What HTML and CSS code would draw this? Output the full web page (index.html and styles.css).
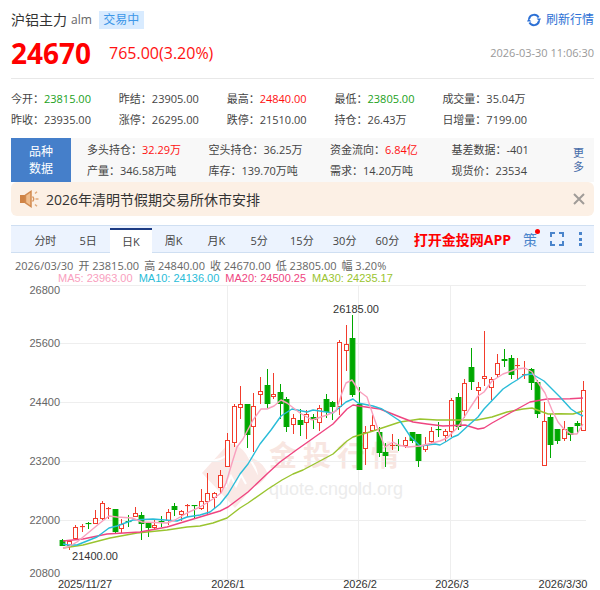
FILE: index.html
```html
<!DOCTYPE html>
<html lang="zh-CN">
<head>
<meta charset="utf-8">
<meta name="viewport" content="width=device-width, initial-scale=1">
<title>沪铝主力 alm</title>
<link rel="stylesheet" href="styles.css">
</head>
<body>
<main class="page">
  <header class="head">
    <div class="head-row">
      <h1 class="name">沪铝主力</h1>
      <span class="code">alm</span>
      <span class="status">交易中</span>
      <button class="refresh" type="button">
        <svg width="14" height="14" viewBox="0 0 14 14" fill="none" stroke="currentColor" stroke-width="2" aria-hidden="true">
          <path d="M2 6A5.2 5.2 0 0 1 11.6 4.4M12 8A5.2 5.2 0 0 1 2.400 9.600"/>
          <path d="M9.600 5.600H14L12.400 8.600ZM4.400 8.400H0L1.600 5.400Z" fill="currentColor" stroke="none"/>
        </svg>
        刷新行情
      </button>
    </div>
    <div class="price-row">
      <strong class="price">24670</strong>
      <span class="change">765.00(3.20%)</span>
      <time class="time">2026-03-30 11:06:30</time>
    </div>
  </header>

  <section class="stats">
    <span>今开：<b class="down">23815.00</b></span>
    <span>昨结：23905.00</span>
    <span>最高：<b class="up">24840.00</b></span>
    <span>最低：<b class="down">23805.00</b></span>
    <span>成交量：35.04万</span>
    <span>昨收：23935.00</span>
    <span>涨停：26295.00</span>
    <span>跌停：21510.00</span>
    <span>持仓：26.43万</span>
    <span>日增量：7199.00</span>
  </section>

  <section class="variety">
    <h2 class="variety-title">品种<br>数据</h2>
    <div class="variety-grid">
      <span>多头持仓：<b class="up">32.29万</b></span>
      <span>空头持仓：36.25万</span>
      <span>资金流向：<b class="up">6.84亿</b></span>
      <span>基差数据：-401</span>
      <span>产量：346.58万吨</span>
      <span>库存：139.70万吨</span>
      <span>需求：14.20万吨</span>
      <span>现货价：23534</span>
    </div>
    <a class="more" href="#more">更多</a>
  </section>

  <section class="notice">
    <svg width="19" height="18" viewBox="0 0 19 18" aria-hidden="true">
      <path d="M0 5H5V13H0Z" fill="#cf8345"/>
      <path d="M5.500 5.200L11 1.500V16.500L5.500 12.800Z" fill="#f0bd8c" stroke="#d18a50" stroke-width="1.500"/>
      <path d="M12.500 6.500Q15 9 12.500 11.500" fill="none" stroke="#d9955e" stroke-width="1.400"/>
      <path d="M15 3.500L17 1.800M15.500 9H18.500M15 14.500L17 16.200" stroke="#e0a879" stroke-width="1.500"/>
    </svg>
    <a class="notice-text" href="#notice">2026年清明节假期交易所休市安排</a>
    <button class="close" type="button" aria-label="关闭">
      <svg width="12" height="12" viewBox="0 0 12 12" stroke="#a09c98" stroke-width="2" aria-hidden="true"><path d="M1 1L11 11M11 1L1 11"/></svg>
    </button>
  </section>

  <nav class="tabs">
    <div class="periods">
      <button type="button">分时</button>
      <button type="button">5日</button>
      <button type="button" class="active">日K</button>
      <button type="button">周K</button>
      <button type="button">月K</button>
      <button type="button">5分</button>
      <button type="button">15分</button>
      <button type="button">30分</button>
      <button type="button">60分</button>
    </div>
    <div class="tools">
      <a class="app" href="#app">打开金投网APP</a>
      <button class="strategy" type="button">策</button>
      <button type="button" aria-label="全屏">
        <svg width="16" height="16" viewBox="0 0 16 16" fill="none" stroke="#4a84cb" stroke-width="2" aria-hidden="true"><path d="M2 6V2H6M10 2H14V6M14 10V14H10M6 14H2V10"/></svg>
      </button>
      <button type="button" aria-label="菜单">
        <svg width="7" height="16" viewBox="0 0 7 16" fill="#4a84cb" aria-hidden="true"><path d="M2 1H5V4H2ZM2 7H5V10H2ZM2 12H5V15H2Z"/></svg>
      </button>
    </div>
  </nav>

  <section class="chart">
    <p class="quote">
      <span>2026/03/30</span>
      <span>开 23815.00</span>
      <span>高 24840.00</span>
      <span>收 24670.00</span>
      <span>低 23805.00</span>
      <span>幅 3.20%</span>
    </p>
    <p class="averages">
      <span class="ma5">MA5: 23963.00</span>
      <span class="ma10">MA10: 24136.00</span>
      <span class="ma20">MA20: 24500.25</span>
      <span class="ma30">MA30: 24235.17</span>
    </p>
    <svg class="plot" viewBox="11 285 583 305" role="img" aria-label="日K线图">
      <g class="watermark">
        <path d="M202 473L229 443Q239 444 246 454L260 479L235 508Z"/>
        <path d="M249 457Q262 460 268 474Q263 482 256 486Q262 471 249 457Z"/>
        <path class="cut" d="M204 461Q221 462 229 453"/>
        <path class="cut" d="M226 487L231 476L236 486L241 475L246 484"/>
        <text class="mark-name" y="466" x="269 303 337 371">金投行情</text>
        <text class="mark-url" x="269" y="495">quote.cngold.org</text>
      </g>
      <path class="grid" d="M60 285.500H586M60 343.500H586M60 402.500H586M60 461.500H586M60 520.500H586M60 579.500H586M227.500 285V579M358.500 285V579M450.500 285V579"/>
      <g id="candles"></g>
      <g id="lines"></g>
      <g class="axis axis-y">
        <text x="60" y="294">26800</text>
        <text x="60" y="347">25600</text>
        <text x="60" y="406">24400</text>
        <text x="60" y="465">23200</text>
        <text x="60" y="524">22000</text>
        <text x="60" y="577">20800</text>
      </g>
      <g class="axis axis-x">
        <text x="85" y="588">2025/11/27</text>
        <text x="228" y="588">2026/1</text>
        <text x="360" y="588">2026/2</text>
        <text x="452" y="588">2026/3</text>
        <text x="563" y="588">2026/3/30</text>
        <text x="356" y="313">26185.00</text>
        <text x="95" y="560">21400.00</text>
      </g>
    </svg>
  </section>
</main>
<script src="chart.js"></script>
</body>
</html>
```
FILE: styles.css
```css
* { box-sizing: border-box; }

body {
  margin: 0;
  background: #fff;
  color: #444;
  font: 11px/21px "Open Sans", "Noto Sans CJK SC", sans-serif;
}

h1, h2, p { margin: 0; font-weight: 400; }
b { font-weight: 400; }
a { color: inherit; text-decoration: none; }
button { padding: 0; border: 0; background: none; color: inherit; font: inherit; cursor: pointer; }
svg { display: block; }

.page { padding: 10px 6px 0 11px; }
.up { color: #f11; }
.down { color: #21a121; }

.head { padding-bottom: 5px; border-bottom: 1px solid #e8e8e8; }
.head-row { display: flex; align-items: center; line-height: 20px; }
.name { font-size: 14px; color: #333; }
.code { margin: 0 7px 0 4px; font-size: 12px; color: #666; }
.status { padding: 0 4px; background: #d8ebff; color: #3d97e8; font-size: 12px; line-height: 18px; width: 45px; text-align: center; }
.refresh { display: flex; align-items: center; gap: 5px; margin-left: auto; color: #2c70d5; font-size: 12px; line-height: 20px; }
.price-row { display: flex; align-items: center; line-height: 40px; margin-top: 3px; }
.price { color: #f00; font-size: 28px; font-weight: 700; }
.change { margin-left: 18px; color: #f11; font-size: 16px; }
.time { margin-left: auto; color: #999; }

.stats { display: grid; grid-template-columns: repeat(5, 18.5%); padding: 9px 0 8px; white-space: nowrap; }

.variety { display: flex; background: #f8f8f8; }
.variety-title { display: grid; place-content: center; width: 60px; height: 44px; background: #457fca; color: #fff; font-size: 12px; line-height: 17px; }
.variety-grid { flex: 1; display: grid; grid-template-columns: repeat(4, 1fr); padding: 1px 0 1px 16px; white-space: nowrap; }
.more { width: 11px; margin-right: 10px; padding-top: 8px; color: #456ba8; line-height: 14px; }

.notice { display: flex; align-items: center; height: 34px; padding: 0 9px; border-radius: 6px; background: #fcf0e5; }
.notice-text { flex: 1; margin-left: 7px; color: #333; font-size: 14px; }

.tabs { display: flex; height: 28px; margin-top: 9px; padding: 0 10px 0 13px; border: solid #cfdff2; border-width: 1px 0; background: #ecf3fe; }
.periods { flex: 1; display: flex; }
.periods button { flex: 1; padding-top: 2px; }
.periods .active { margin: 2px 0 -1px; padding: 0; border-top: 2px solid #1c3b83; background: #fff; }
.tools { display: flex; align-items: center; gap: 12px; padding-left: 5px; white-space: nowrap; }
.app { color: #f00; font-size: 14px; font-weight: 700; }
.strategy { position: relative; color: #4a84cb; font-size: 14px; }
.strategy::after { content: ""; position: absolute; top: 0; right: -3px; width: 5px; height: 5px; border-radius: 50%; background: #f00; }

.chart { padding-top: 6px; }
.quote { display: flex; gap: 5px; padding-left: 4px; color: #666; line-height: 13px; white-space: nowrap; }
.averages { display: flex; gap: 6px; padding-left: 47px; font: 11px/13px "Liberation Sans", sans-serif; white-space: nowrap; }
.ma5 { color: #f9a0be; }
.ma10 { color: #29bcd8; }
.ma20 { color: #ef4581; }
.ma30 { color: #9ac42f; }

.plot { width: 100%; height: auto; overflow: visible; }
.grid { stroke: #eee; fill: none; }
.axis { fill: #333; font: 11px "Liberation Sans", sans-serif; }
.axis-y { fill: #666; text-anchor: end; }
.axis-x { text-anchor: middle; }
.rise { fill: #fff; stroke: #f23c2c; }
.rise-wick { stroke: #f23c2c; }
.fall { fill: #00a800; stroke: #00a800; }
.line { fill: none; stroke: currentColor; stroke-width: 1.4; stroke-linejoin: round; }
.watermark { fill: #fae9e6; }
.cut { fill: none; stroke: #fff; stroke-width: 2; }
.mark-name { fill: #f8e6e1; font: 700 28px "Noto Sans CJK SC", sans-serif; }
.mark-url { fill: #ececec; font: 18px "Liberation Sans", sans-serif; }
```
FILE: chart.js
```js
// Each candle: direction (r = rise, g = fall), body top, body bottom, wick top, wick bottom.
const candles = `g 540 546 539 546|r 541 546 541 550|r 527 539 525 539|r 526 527 524 532|g 523 524 522 529|r 518 524 510 524|r 503 519 501 520|r 508 509 507 519
g 509 532 509 533|r 524 529 519 533|g 521 522 515 527|r 513 517 507 517|g 515 524 512 540|g 523 528 523 537|r 525 528 520 529|g 521 522 516 527
r 512 521 509 525|g 506 510 503 516|r 511 515 510 521|r 505 506 504 517|g 505 506 505 518|r 501 509 489 510|r 493 502 473 515|r 493 498 492 508
r 475 488 470 493|r 440 467 433 467|r 406 443 404 447|r 404 408 386 419|g 404 435 404 448|r 406 427 393 452|r 391 395 377 404|g 385 404 369 409
r 394 397 373 399|g 392 404 384 419|g 399 427 397 432|r 418 425 414 434|g 420 425 409 436|r 414 423 410 439|g 417 420 414 429|r 408 423 405 431
g 399 412 394 418|g 402 407 401 420|r 342 407 340 415|r 344 351 325 371|g 338 395 315 397|g 404 470 387 470|r 432 449 426 465|r 425 431 415 432
g 432 453 427 457|g 452 456 443 467|r 445 446 434 450|g 445 446 439 451|r 440 446 437 448|g 432 441 432 443|g 434 461 434 467|r 445 450 437 452
r 431 442 427 443|g 429 430 422 437|r 431 436 429 442|r 400 432 398 437|g 397 427 393 430|r 383 411 379 418|g 367 382 348 390|r 387 391 382 409
r 376 379 331 386|r 379 388 377 400|r 363 375 354 377|g 359 361 349 367|g 358 375 355 379|r 365 366 358 380|r 374 375 361 379|g 369 383 368 390
g 382 414 380 418|r 421 466 402 466|g 417 445 414 458|g 429 441 429 444|r 429 439 421 441|g 427 435 427 441|g 423 426 421 434|r 390 431 381 431`.split(/[|\n]/);

const lines = {
  ma30: "63,548 83,545 110,538 137,533 167,530 187,527 200,526 213,523 227,518 240,508 248,503 268,489 282,480 293,474 303,470 333,454 347,441 353,437 373,431 400,422 420,419 437,420 477,420 492,417 507,412 523,409 532,408 548,414 560,413.700 573,414 583,411",
  ma20: "63,541 83,539 107,534 140,532 167,527 200,517 220,511 228,507 248,492 268,473 280,462 295,451 312,439 333,424 347,409 353,405 359,406 380,409 400,417 413,422 427,424 443,426 465,425 478,429 484,428 492,423 510,413 530,402 547,399 570,398.700 583,398",
  ma10: "63,544 68,545 77,545 97,537 109,528 117,526 133,520 153,519 177,521 187,517 200,515 210,512 220,504 228,494 240,474 248,464 260,444 271,430 281,416 292,409 307,412 313,410 333,413 346,402 353,399 358,403 373,406 382,409 400,421 410,436 420,446 435,444 440,445 447,441 453,437 458,435 470,424 478,417 484,409 503,389 512,383 517,380 524,375 532,374 544,381 560,397 571,409 577,413 583,416",
  ma5: "63,548 68,547 77,542 88,533 100,523 109,516 117,517 132,518 142,522 167,523 175,520 187,513 200,507 213,499 221,493 226,483 232,463 237,447 243,439 253,420 261,409 267,409 274,406 281,400 287,403 300,413 312,420 327,415 336,411 342,393 346,383 352,380 359,391 367,397 373,415 380,435 385,447 393,442 398,445 408,447 420,446 440,441 447,438 458,427 470,408 478,396 484,392 492,381 503,374 517,369 525,368 532,372 537,381 545,393 552,410 558,422 563,428 571,434 577,434 583,424"
};

const FIRST_X = 62.4;
const STEP = 6.6;

document.getElementById("candles").innerHTML = candles.map((row, i) => {
  const [kind, ...levels] = row.split(" ");
  const [top, bottom, high, low] = levels.map(Number);
  const x = Math.round(FIRST_X + i * STEP - 0.5) + 0.5;
  const rise = kind === "r";
  const half = rise ? 2 : 2.4;
  return `<path class="${rise ? "rise-wick" : "fall"}" d="M${x} ${high}V${low}"/>` +
    `<rect class="${rise ? "rise" : "fall"}" x="${x - half}" y="${top + 0.5}" width="${half * 2}" height="${Math.max(bottom - top - 1, 0.1)}"/>`;
}).join("");

document.getElementById("lines").innerHTML = Object.entries(lines)
  .map(([name, points]) => `<polyline class="line ${name}" points="${points}"/>`)
  .join("");
```
